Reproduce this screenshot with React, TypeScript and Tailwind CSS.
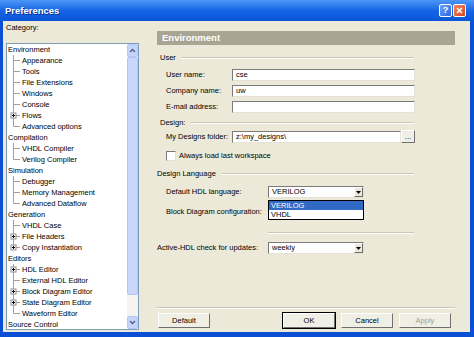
import React from "react";

type Node = { label: string; level: 0 | 1; plus?: boolean; last?: boolean };

const tree: Node[] = [
    {label: "Environment", level: 0},
    {label: "Appearance", level: 1},
    {label: "Tools", level: 1},
    {label: "File Extensions", level: 1},
    {label: "Windows", level: 1},
    {label: "Console", level: 1},
    {label: "Flows", level: 1, plus: true},
    {label: "Advanced options", level: 1, last: true},
    {label: "Compilation", level: 0},
    {label: "VHDL Compiler", level: 1},
    {label: "Verilog Compiler", level: 1, last: true},
    {label: "Simulation", level: 0},
    {label: "Debugger", level: 1},
    {label: "Memory Management", level: 1},
    {label: "Advanced Dataflow", level: 1, last: true},
    {label: "Generation", level: 0},
    {label: "VHDL Case", level: 1},
    {label: "File Headers", level: 1, plus: true},
    {label: "Copy Instantiation", level: 1, plus: true, last: true},
    {label: "Editors", level: 0},
    {label: "HDL Editor", level: 1, plus: true},
    {label: "External HDL Editor", level: 1},
    {label: "Block Diagram Editor", level: 1, plus: true},
    {label: "State Diagram Editor", level: 1, plus: true},
    {label: "Waveform Editor", level: 1, last: true},
    {label: "Source Control", level: 0},
];

const TreeLines = ({plus, last}: { plus?: boolean; last?: boolean }) => (
    <svg width="12" height="11" viewBox="0 0 12 11" className="shrink-0">
        <line x1="5.5" y1="0" x2="5.5" y2={last ? 5.5 : 11} stroke="#a0a0a0" strokeWidth="1"/>
        <line x1="5.5" y1="5.5" x2="12" y2="5.5" stroke="#a0a0a0" strokeWidth="1"/>
        {plus && (
            <>
                <rect x="3" y="3" width="5" height="5" fill="#fff" stroke="#8c8c8c" strokeWidth="1"/>
                <line x1="4" y1="5.5" x2="7" y2="5.5" stroke="#000" strokeWidth="1"/>
                <line x1="5.5" y1="4" x2="5.5" y2="7" stroke="#000" strokeWidth="1"/>
            </>
        )}
    </svg>
);

const Chevron = ({down}: { down?: boolean }) => (
    <svg width="7" height="5" viewBox="0 0 7 5">
        <path d={down ? "M1 1 L3.5 3.5 L6 1" : "M1 4 L3.5 1.5 L6 4"} fill="none" stroke="#4d6185" strokeWidth="1.4"/>
    </svg>
);

const Input = ({value, className = ""}: { value?: string; className?: string }) => (
    <div className={"h-[12px] bg-white border-t border-l border-t-[#7a7a7a] border-l-[#7a7a7a] border-b border-r border-b-[#e4e2d6] border-r-[#e4e2d6] flex items-center pl-[3px] text-[7.5px] " + className}>
        {value}
    </div>
);

const Select = ({value}: { value: string }) => (
    <div className="w-[96px] h-[12px] bg-white border-t border-l border-t-[#7a7a7a] border-l-[#7a7a7a] border-b border-r border-b-[#e4e2d6] border-r-[#e4e2d6] flex items-center justify-between pl-[3px] text-[7.5px]">
        <span>{value}</span>
        <span className="w-[9px] h-[10px] bg-[#ECE9D8] border-t border-l border-t-white border-l-white border-b border-r border-b-[#6e6e6e] border-r-[#6e6e6e] flex items-center justify-center">
            <svg width="5" height="3" viewBox="0 0 5 3"><path d="M0 0 H5 L2.5 3 Z" fill="#000"/></svg>
        </span>
    </div>
);

const GroupLabel = ({text, className = ""}: { text: string; className?: string }) => (
    <div className={"h-[12px] flex items-center gap-[6px] " + className}>
        <span>{text}</span>
        <div className="flex-1 border-t border-t-[#c9c6b5] border-b border-b-white"/>
    </div>
);

const Button = ({text, primary, disabled}: { text: string; primary?: boolean; disabled?: boolean }) => (
    <div className={"w-[52px] h-[15px] flex items-center justify-center bg-[#f0efe6] text-[7.5px] border-t border-l border-t-white border-l-white border-b border-r border-b-[#6f6f6f] border-r-[#6f6f6f] " + (primary ? "outline outline-1 outline-black " : "") + (disabled ? "text-[#a4a293]" : "text-black")}>
        {text}
    </div>
);

export default function App() {
    return (
        <div className="w-[474px] h-[337px] bg-[#0a4fd4] flex flex-col text-black"
             style={{fontFamily: '"Liberation Sans", Arial, sans-serif'}}>
            <div className="h-[21px] shrink-0 bg-linear-to-b from-[#4d97f7] via-[#1565e6] to-[#0a55d8] flex items-center justify-between pl-[5px] pr-[8px]">
                <span className="text-white font-bold text-[9.5px] leading-none [text-shadow:1px_1px_0_#0a2f8a]">Preferences</span>
                <div className="flex gap-[1px]">
                    <div className="w-[13px] h-[13px] rounded-[2px] bg-linear-to-br from-[#6fa3f8] to-[#2a64e0] border border-white flex items-center justify-center text-white text-[9px] font-bold leading-none">?</div>
                    <div className="w-[13px] h-[13px] rounded-[2px] bg-linear-to-br from-[#f0865e] to-[#d5431e] border border-white flex items-center justify-center">
                        <svg width="7" height="7" viewBox="0 0 7 7"><path d="M1 1 L6 6 M6 1 L1 6" stroke="#fff" strokeWidth="1.6"/></svg>
                    </div>
                </div>
            </div>
            <div className="flex-1 ml-[3px] mr-[4px] mb-[5px] bg-[#ECE9D8] flex text-[7.5px]">
                <div className="ml-[3px] w-[133px] flex flex-col">
                    <div className="mt-[1px] h-[11px] flex items-center">Category:</div>
                    <div className="mt-[10px] h-[287px] bg-white border border-[#7f9db9] flex overflow-hidden">
                        <div className="flex-1 flex flex-col pl-[1px]">
                            {tree.map(n => (
                                <div key={n.label} className="h-[11px] shrink-0 flex items-center whitespace-nowrap">
                                    {n.level === 1 && <span className="mr-[2px] flex"><TreeLines plus={n.plus} last={n.last}/></span>}
                                    <span>{n.label}</span>
                                </div>
                            ))}
                        </div>
                        <div className="w-[11px] bg-[#f4f3ee] flex flex-col">
                            <div className="h-[13px] bg-[#c6d5fb] border border-[#b4c7f5] rounded-[2px] flex items-center justify-center"><Chevron/></div>
                            <div className="h-[238px] bg-[#c8d7fb] border border-[#b2c5f5] rounded-[2px]"/>
                            <div className="flex-1"/>
                            <div className="h-[13px] bg-[#c6d5fb] border border-[#b4c7f5] rounded-[2px] flex items-center justify-center"><Chevron down/></div>
                        </div>
                    </div>
                </div>
                <div className="ml-[18px] w-[298px] flex flex-col">
                    <div className="mt-[10px] h-[14px] bg-[#a8a593] text-white font-bold text-[9.5px] flex items-center pl-[5px]">Environment</div>
                    <GroupLabel text="User" className="mt-[7px] ml-[3px] w-[254px]"/>
                    <div className="mt-[5px] flex items-center">
                        <span className="ml-[9px] w-[66px]">User name:</span>
                        <Input value="cse" className="w-[183px]"/>
                    </div>
                    <div className="mt-[4px] flex items-center">
                        <span className="ml-[9px] w-[66px]">Company name:</span>
                        <Input value="uw" className="w-[183px]"/>
                    </div>
                    <div className="mt-[4px] flex items-center">
                        <span className="ml-[9px] w-[66px]">E-mail address:</span>
                        <Input className="w-[183px]"/>
                    </div>
                    <GroupLabel text="Design:" className="mt-[4px] ml-[3px] w-[254px]"/>
                    <div className="mt-[1px] flex items-center">
                        <span className="ml-[9px] w-[66px]">My Designs folder:</span>
                        <Input value="z:\my_designs\" className="w-[169px]"/>
                        <div className="w-[14px] h-[13px] bg-[#f0efe6] border-t border-l border-t-white border-l-white border-b border-r border-b-[#6f6f6f] border-r-[#6f6f6f] flex items-end justify-center pb-[2px] leading-none">...</div>
                    </div>
                    <div className="mt-[7px] h-[12px] flex items-center">
                        <span className="ml-[9px] w-[10px] h-[10px] bg-white border-t border-l border-t-[#7a7a7a] border-l-[#7a7a7a] border-b border-r border-b-[#e4e2d6] border-r-[#e4e2d6]"/>
                        <span className="ml-[3px]">Always load last workspace</span>
                    </div>
                    <GroupLabel text="Design Language" className="mt-[6px] w-[257px]"/>
                    <div className="mt-[6px] flex items-center">
                        <span className="ml-[9px] w-[102px]">Default HDL language:</span>
                        <div className="relative">
                            <Select value="VERILOG"/>
                            <div className="absolute top-[14px] left-0 w-[96px] bg-white border border-black z-10 flex flex-col">
                                <div className="h-[9px] bg-[#316ac5] text-white flex items-center pl-[2px]">VERILOG</div>
                                <div className="h-[9px] flex items-center pl-[2px]">VHDL</div>
                            </div>
                        </div>
                    </div>
                    <div className="mt-[8px] flex items-center">
                        <span className="ml-[9px] w-[102px]">Block Diagram configuration:</span>
                        <Select value=""/>
                    </div>
                    <div className="mt-[14px] ml-[111px] w-[146px] border-t border-t-[#c9c6b5] border-b border-b-white"/>
                    <div className="mt-[8px] flex items-center">
                        <span className="w-[111px]">Active-HDL check for updates:</span>
                        <Select value="weekly"/>
                    </div>
                    <div className="flex-1"/>
                    <div className="border-t border-t-[#c9c6b5] border-b border-b-white"/>
                    <div className="mt-[4px] mb-[4px] flex items-center">
                        <div className="ml-[1px]"><Button text="Default"/></div>
                        <div className="flex-1"/>
                        <div className="flex gap-[6px] mr-[4px]">
                            <Button text="OK" primary/>
                            <Button text="Cancel"/>
                            <Button text="Apply" disabled/>
                        </div>
                    </div>
                </div>
            </div>
        </div>
    );
}
